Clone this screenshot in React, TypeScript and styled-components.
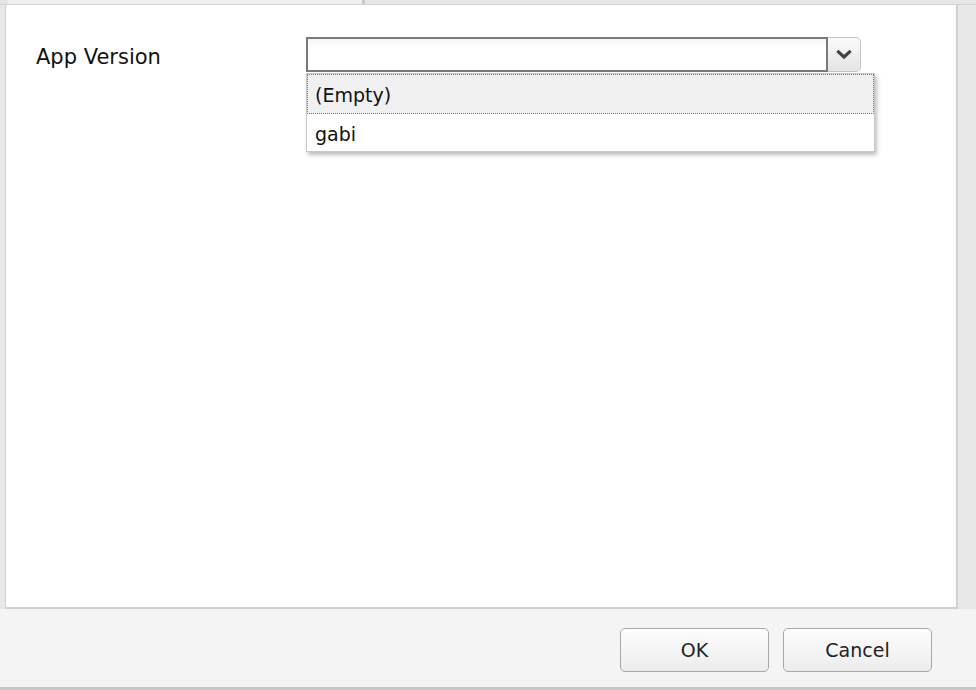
import styled, { createGlobalStyle } from "styled-components";

const GlobalStyle = createGlobalStyle`
  html, body {
    margin: 0;
    padding: 0;
    background: #e8e8e8;
  }
  body {
    font-family: "DejaVu Sans", Verdana, sans-serif;
    color: #111;
  }
`;

const Window = styled.div`
  width: 976px;
  height: 690px;
  display: flex;
  flex-direction: column;
  background: #e8e8e8;
  overflow: hidden;
`;

const TabStrip = styled.div`
  height: 4px;
  display: flex;
  padding-left: 8px;
  background: #e6e6e6;
  border-bottom: 1px solid #d2d2d2;
`;

const Tab = styled.div`
  width: 354px;
  background: #f0f0f0;
  border-right: 3px solid #c8c8c8;
`;

const Body = styled.div`
  flex: 1;
  display: flex;
  padding: 0 18px 0 5px;
`;

const Panel = styled.div`
  flex: 1;
  background: #fff;
  border-left: 1px solid #d0d0d0;
  border-right: 2px solid #d0d0d0;
  border-bottom: 2px solid #d0d0d0;
  padding: 32px 0 0 30px;
`;

const FieldRow = styled.div`
  display: flex;
  align-items: flex-start;
`;

const Label = styled.div`
  width: 270px;
  padding-top: 8px;
  font-size: 21px;
  color: #111;
`;

const ComboWrap = styled.div`
  position: relative;
`;

const Combo = styled.div`
  display: flex;
  height: 35px;
`;

const Input = styled.div`
  width: 518px;
  border: 2px solid #7a7a7a;
  background: linear-gradient(#f6f6f6, #fff 30%);
`;

const Trigger = styled.div`
  width: 33px;
  box-sizing: border-box;
  border: 1px solid #c4c4c4;
  border-left: none;
  border-radius: 0 5px 5px 0;
  background: linear-gradient(#fafafa, #e4e4e4);
  display: flex;
  align-items: center;
  justify-content: center;
`;

const List = styled.div`
  position: absolute;
  top: 36px;
  left: 0;
  width: 567px;
  background: #fff;
  border: 1px solid #c8c8c8;
  box-shadow: 2px 3px 4px rgba(0, 0, 0, 0.25);
`;

const Item = styled.div<{ $active?: boolean }>`
  height: ${(p) => (p.$active ? "40px" : "37px")};
  box-sizing: border-box;
  display: flex;
  align-items: center;
  padding: 2px 0 0 7px;
  font-size: 19px;
  color: #111;
  background: ${(p) => (p.$active ? "#f0f0f0" : "#fff")};
  border: 1px dotted ${(p) => (p.$active ? "#777" : "transparent")};
`;

const Footer = styled.div`
  height: 81px;
  background: #f4f4f4;
  border-bottom: 3px solid #c6c6c6;
  display: flex;
  justify-content: flex-end;
  align-items: flex-start;
  gap: 14px;
  padding: 19px 44px 0 0;
  box-sizing: border-box;
`;

const Button = styled.button`
  width: 149px;
  height: 44px;
  border: 1px solid #a8a8a8;
  border-radius: 5px;
  background: linear-gradient(#fdfdfd, #ececec);
  font-family: "DejaVu Sans", Verdana, sans-serif;
  font-size: 19px;
  color: #222;
  padding: 0;
`;

const Chevron = () => (
  <svg width="16" height="10" viewBox="0 0 16 10">
    <path d="M2.5 2 L8 7 L13.5 2" fill="none" stroke="#444" strokeWidth="3.2" strokeLinecap="square" />
  </svg>
);

export default function App() {
  return (
    <>
      <GlobalStyle />
      <Window>
        <TabStrip>
          <Tab />
        </TabStrip>
        <Body>
          <Panel>
            <FieldRow>
              <Label>App Version</Label>
              <ComboWrap>
                <Combo>
                  <Input />
                  <Trigger>
                    <Chevron />
                  </Trigger>
                </Combo>
                <List>
                  <Item $active>(Empty)</Item>
                  <Item>gabi</Item>
                </List>
              </ComboWrap>
            </FieldRow>
          </Panel>
        </Body>
        <Footer>
          <Button>OK</Button>
          <Button>Cancel</Button>
        </Footer>
      </Window>
    </>
  );
}
